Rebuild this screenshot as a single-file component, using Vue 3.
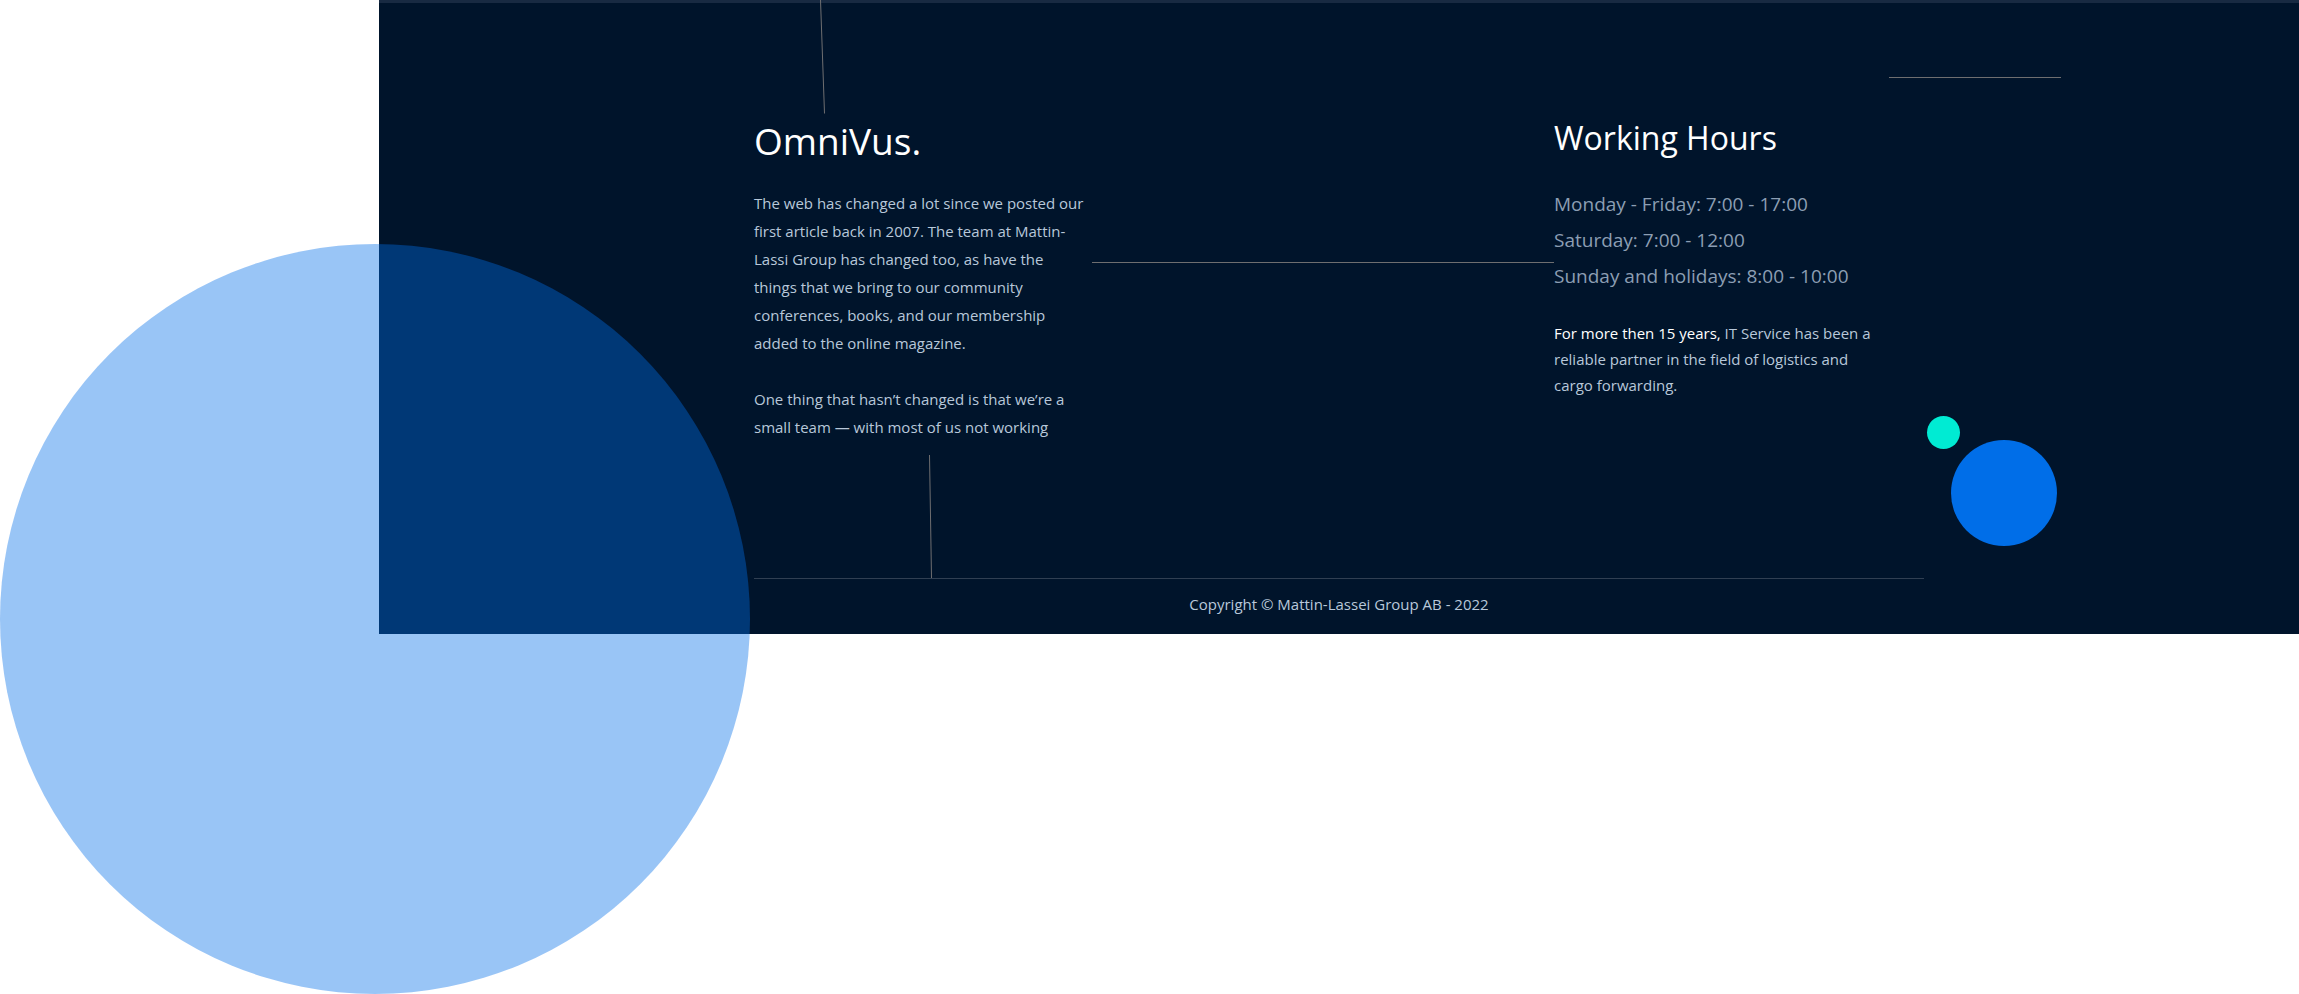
<script setup>
const hours = [
  'Monday - Friday: 7:00 - 17:00',
  'Saturday: 7:00 - 12:00',
  'Sunday and holidays: 8:00 - 10:00',
]
</script>

<template>
  <div class="page">
    <footer class="footer">
      <div class="container">
        <div class="columns">
          <section class="about">
            <h2 class="brand">OmniVus.</h2>
            <p>
              The web has changed a lot since we posted our<br />
              first article back in 2007. The team at Mattin-<br />
              Lassi Group has changed too, as have the<br />
              things that we bring to our community<br />
              conferences, books, and our membership<br />
              added to the online magazine.
            </p>
            <p>
              One thing that hasn’t changed is that we’re a<br />
              small team — with most of us not working
            </p>
          </section>
          <section class="hours">
            <h3 class="heading">Working Hours</h3>
            <ul class="times">
              <li v-for="line in hours" :key="line">{{ line }}</li>
            </ul>
            <p class="note">
              <strong>For more then 15 years,</strong> IT Service has been a<br />
              reliable partner in the field of logistics and<br />
              cargo forwarding.
            </p>
          </section>
        </div>
        <p class="copyright">Copyright © Mattin-Lassei Group AB - 2022</p>

        <svg class="lines" width="1320" height="634" viewBox="0 0 1320 634" aria-hidden="true">
          <path d="M66.5 0L70.5 113.5" />
          <path d="M175.5 455L177.5 578" />
          <path d="M338 262.5H800" />
          <path d="M1135 77.5H1307" />
        </svg>
        <span class="dot dot-teal"></span>
        <span class="dot dot-blue"></span>
      </div>
      <span class="dot dot-large"></span>
    </footer>
  </div>
</template>

<style>
body {
  margin: 0;
  background: #fff;
}
</style>

<style scoped>
.page {
  min-height: 100vh;
  overflow: hidden;
  box-sizing: border-box;
  padding-left: 379px;
  font-family: "Open Sans", "Noto Sans", sans-serif;
  font-size: 15px;
  color: #b8c8da;
}
.footer {
  position: relative;
  background: #00142b;
  border-top: 3px solid #182a42;
}
.container {
  position: relative;
  max-width: 1170px;
  margin: 0 auto;
  padding-top: 111px;
}
.columns {
  display: grid;
  grid-template-columns: repeat(3, 1fr);
  column-gap: 30px;
  height: 464px;
  border-bottom: 1px solid #303f52;
}
h2,
h3,
p,
ul {
  margin: 0;
  padding: 0;
}
p {
  white-space: nowrap;
}
.brand {
  font-size: 37px;
  line-height: 54px;
  font-weight: 400;
  color: #fff;
  margin-bottom: 21px;
}
.about p {
  line-height: 28px;
  margin-bottom: 28px;
}
.hours {
  grid-column: 3;
}
.heading {
  font-size: 32px;
  line-height: 48px;
  font-weight: 400;
  color: #fff;
  margin-bottom: 24px;
}
.times {
  list-style: none;
  font-size: 19px;
  line-height: 36px;
  color: #8c9eb3;
  margin-bottom: 26px;
}
.note {
  line-height: 26px;
}
.note strong {
  font-weight: 500;
  color: #fff;
}
.copyright {
  text-align: center;
  line-height: 24px;
  padding: 13px 0 18px;
}
.lines {
  position: absolute;
  left: 0;
  top: -3px;
  fill: none;
  stroke: #6e6e70;
  stroke-width: 1;
  pointer-events: none;
}
.dot {
  position: absolute;
  border-radius: 50%;
}
.dot-teal {
  left: 1173px;
  top: 413px;
  width: 33px;
  height: 33px;
  background: #00ebd3;
}
.dot-blue {
  left: 1197px;
  top: 437px;
  width: 106px;
  height: 106px;
  background: #006ee8;
}
.dot-large {
  left: -379px;
  bottom: -360px;
  width: 750px;
  height: 750px;
  background: #006ee8;
  opacity: 0.4;
}
</style>
